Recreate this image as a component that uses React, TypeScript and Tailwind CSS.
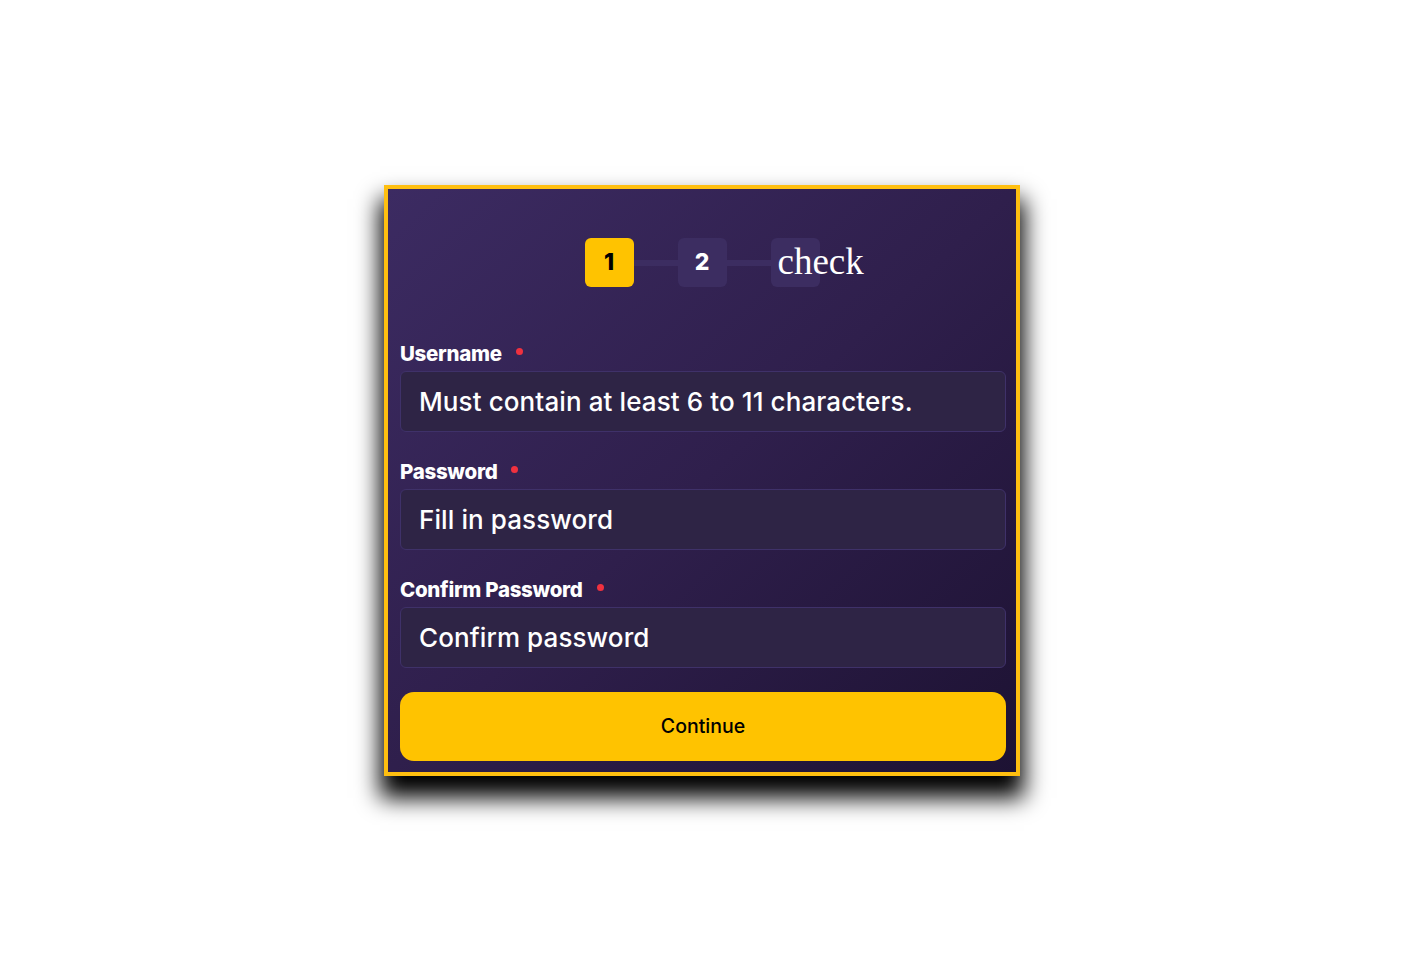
import type { ReactNode } from "react";

const sans = { fontFamily: "Inter, 'Open Sans', sans-serif" };

function Field({ label, placeholder }: { label: string; placeholder: string }) {
  return (
    <div className="flex flex-col">
      <div className="flex h-[22px] items-center gap-[14px]">
        <span className="text-[20.5px] font-extrabold leading-none tracking-[-0.3px] text-white">{label}</span>
        <span className="mb-[6px] h-[7px] w-[7px] rounded-full bg-[#f0313f]" />
      </div>
      <div className="mt-[6px] flex h-[61px] items-center rounded-[6px] border border-[#3f3169] bg-[#2e2445] px-[18px]">
        <span className="text-[26px] font-medium tracking-[0.1px] text-white">{placeholder}</span>
      </div>
    </div>
  );
}

function Step({ active, children }: { active?: boolean; children: ReactNode }) {
  return (
    <div
      className={
        active
          ? "flex h-[49px] w-[49px] items-center justify-center rounded-[6px] bg-[#ffc300] text-[23px] font-extrabold text-black"
          : "flex h-[49px] w-[49px] items-center justify-center rounded-[6px] bg-[#3c2d61] text-[23px] font-extrabold text-white"
      }
    >
      {children}
    </div>
  );
}

export default function App() {
  return (
    <div className="flex min-h-screen justify-center bg-white pt-[185px]" style={sans}>
      <div className="h-[591px] w-[636px] border-[4px] border-[#ffbf10] bg-gradient-to-br from-[#3c2b62] via-[#2f1f4c] to-[#1d1233] pb-[10px] pl-[12px] pr-[10px] pt-[49px] shadow-[0_18px_22px_4px_#000]">
        <div className="flex items-center justify-center pr-[2px]">
          <Step active>1</Step>
          <div className="h-[6px] w-[44px] bg-[#3c2d61]" />
          <Step>2</Step>
          <div className="h-[6px] w-[44px] bg-[#3c2d61]" />
          <div className="relative h-[49px] w-[49px] rounded-[6px] bg-[#3c2d61]">
            <span
              className="absolute left-[7px] top-[2px] text-[37px] leading-[44px] text-white"
              style={{ fontFamily: "'Liberation Serif', serif" }}
            >
              check
            </span>
          </div>
        </div>

        <div className="mt-[56px] flex flex-col gap-[29px]">
          <Field label="Username" placeholder="Must contain at least 6 to 11 characters." />
          <Field label="Password" placeholder="Fill in password" />
          <Field label="Confirm Password" placeholder="Confirm password" />
        </div>

        <button className="mt-[24px] flex h-[69px] w-full items-center justify-center rounded-[14px] bg-[#ffc300] text-[19.5px] font-medium text-black">
          Continue
        </button>
      </div>
    </div>
  );
}
